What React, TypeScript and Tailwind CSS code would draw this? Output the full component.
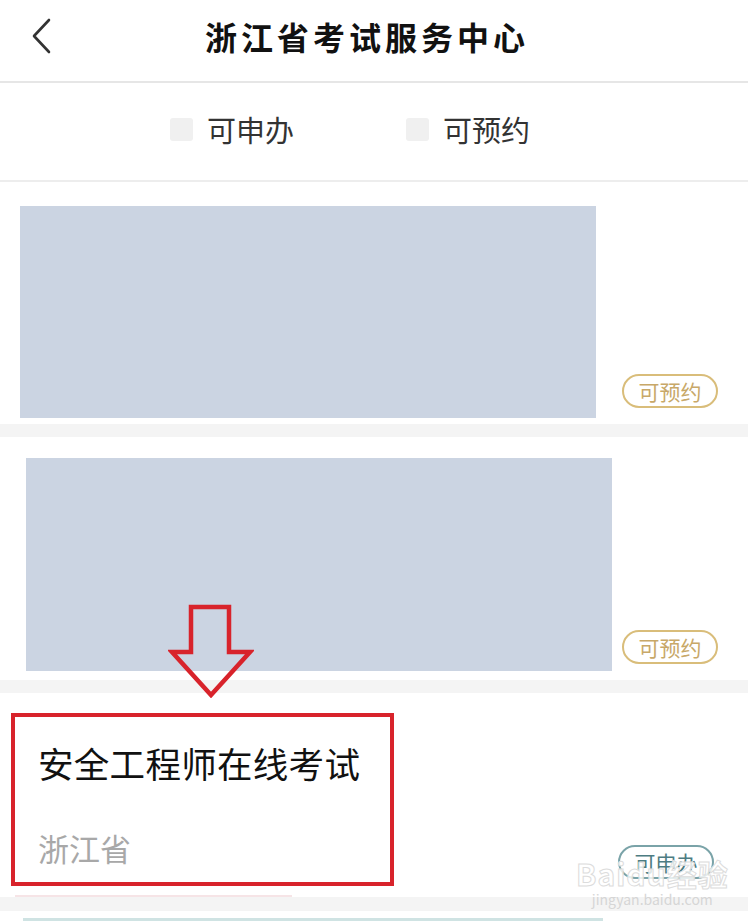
import React from "react";

const font = { fontFamily: '"Noto Sans CJK SC", "Noto Sans", sans-serif' };

function Badge({ label, tone }: { label: string; tone: "gold" | "teal" }) {
  const cls =
    tone === "gold"
      ? "border-[#d9bd7a] text-[#c8a868]"
      : "border-[#7aa3a8] text-[#4d7c82]";
  return (
    <div
      className={`flex h-[34px] w-[96px] items-center justify-center rounded-full border-2 text-[21px] leading-none ${cls}`}
    >
      {label}
    </div>
  );
}

export default function App() {
  return (
    <div className="relative h-[924px] w-[748px] overflow-hidden bg-white" style={font}>
      {/* Header */}
      <div className="relative flex h-[83px] items-center justify-center border-b-2 border-[#e6e6e6] pb-[10px]">
        <svg
          className="absolute left-[30px] top-[18px]"
          width="24"
          height="36"
          viewBox="0 0 24 36"
          fill="none"
        >
          <path d="M19 2 L4 18 L19 34" stroke="#333" strokeWidth="2.6" strokeLinecap="round" strokeLinejoin="round" />
        </svg>
        <div className="pr-[14px] text-[32px] font-bold leading-none tracking-[4px] text-[#111]">
          浙江省考试服务中心
        </div>
      </div>

      {/* Filter bar */}
      <div className="flex h-[99px] items-center border-b-2 border-[#ededed] pb-[4px] pl-[170px]">
        <div className="flex items-center gap-[14px]">
          <div className="h-[23px] w-[23px] rounded-[3px] bg-[#f0f0f0]" />
          <span className="text-[29px] leading-none text-[#333]">可申办</span>
        </div>
        <div className="ml-[112px] flex items-center gap-[14px]">
          <div className="h-[23px] w-[23px] rounded-[3px] bg-[#f0f0f0]" />
          <span className="text-[29px] leading-none text-[#333]">可预约</span>
        </div>
      </div>

      {/* Card 1 */}
      <div className="flex items-end pb-[6px] pl-[20px] pr-[30px] pt-[24px]">
        <div className="h-[212px] w-[576px] bg-[#cbd4e2]" />
        <div className="mb-[10px] ml-auto">
          <Badge label="可预约" tone="gold" />
        </div>
      </div>
      <div className="h-[13px] bg-[#f4f4f4]" />

      {/* Card 2 */}
      <div className="flex items-end pb-[9px] pl-[26px] pr-[30px] pt-[21px]">
        <div className="h-[213px] w-[586px] bg-[#cbd4e2]" />
        <div className="mb-[7px] ml-auto">
          <Badge label="可预约" tone="gold" />
        </div>
      </div>
      <div className="h-[13px] bg-[#f4f4f4]" />

      {/* Card 3 */}
      <div className="relative h-[204px] pl-[38px] pt-[52px]">
        <div className="text-[35.5px] leading-[36px] tracking-[0.3px] text-[#111]">安全工程师在线考试</div>
        <div className="mt-[51px] text-[31px] leading-[32px] text-[#a8a8a8]">浙江省</div>
        <div className="absolute bottom-[18px] right-[34px]">
          <Badge label="可申办" tone="teal" />
        </div>
        <div className="absolute bottom-0 left-[15px] h-[2px] w-[277px] bg-[#f6e4e6]" />
      </div>
      <div className="h-[14px] bg-[#f4f4f4]" />

      {/* Card 4 (cut off) */}
      <div className="ml-[23px] mt-[7px] h-[3px] w-[580px] bg-[#cfe3e3]" />

      {/* Annotation: red arrow */}
      <svg
        className="absolute left-[168px] top-[604px]"
        width="86"
        height="94"
        viewBox="0 0 86 94"
        fill="none"
      >
        <path
          d="M23 3 H61 V48 H82 L43 91 L4 48 H23 Z"
          stroke="#d8232b"
          strokeWidth="4.5"
          strokeLinejoin="miter"
        />
      </svg>

      {/* Annotation: red box */}
      <div className="absolute left-[11px] top-[713px] h-[173px] w-[383px] border-[4px] border-[#d8232b]" />

      {/* Watermark */}
      <div className="pointer-events-none absolute left-[576px] top-[858px] flex flex-col items-center text-white/80">
        <div className="text-[30px] font-bold leading-none tracking-[1px]" style={{ WebkitTextStroke: "1px #dcdcdc" }}>
          Baidu经验
        </div>
        <div className="mt-[4px] text-[14px] leading-none text-[#d6d6d6]">jingyan.baidu.com</div>
      </div>
    </div>
  );
}
